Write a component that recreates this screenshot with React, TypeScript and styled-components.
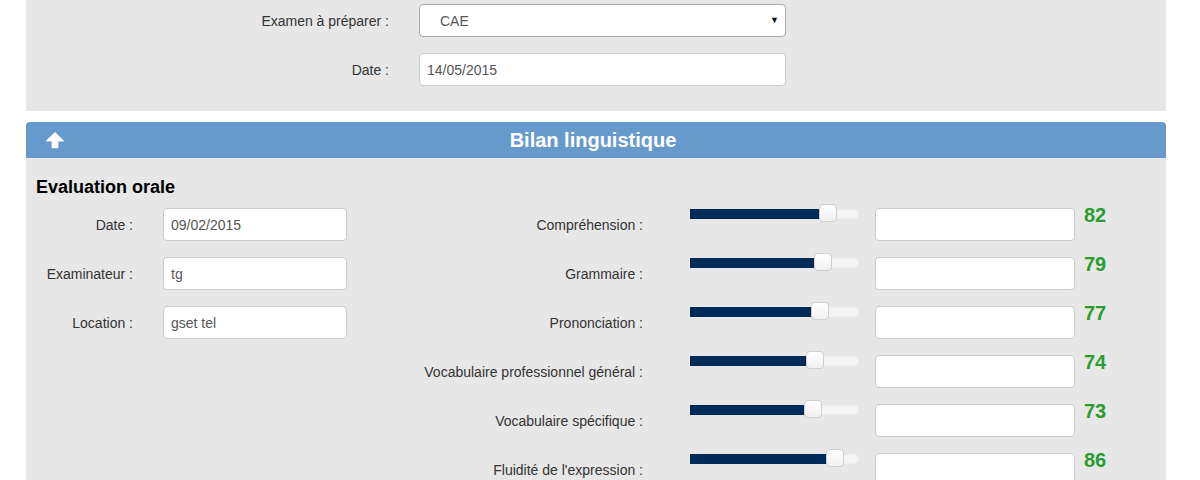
import * as React from 'react'
import styled, { createGlobalStyle } from 'styled-components'

const GlobalStyle = createGlobalStyle`
  body {
    margin: 0;
    background: #ffffff;
    font-family: "Liberation Sans", Arial, sans-serif;
    font-size: 14px;
    color: #333333;
  }
`

const Page = styled.div`
  width: 1140px;
  margin-left: 26px;
`

const ExamPanel = styled.div`
  background: #e7e7e7;
  padding: 4px 0 25px;
  display: grid;
  grid-template-columns: 363px 367px;
  column-gap: 30px;
  row-gap: 16px;
  align-items: center;
`

const FieldLabel = styled.label`
  text-align: right;
  line-height: 20px;
  color: #333333;
`

const SelectWrap = styled.div`
  position: relative;
  height: 33px;
`

const Select = styled.select`
  appearance: none;
  width: 100%;
  height: 33px;
  box-sizing: border-box;
  border: 1px solid #a9a9a9;
  border-radius: 4px;
  background: #ffffff;
  padding: 0 20px;
  font-family: inherit;
  font-size: 14px;
  color: #555555;
`

const SelectArrow = styled.span`
  position: absolute;
  right: 7px;
  top: 11px;
  font-size: 9px;
  color: #111111;
  pointer-events: none;
`

const TextInput = styled.input<{ $width: number }>`
  width: ${(p) => p.$width}px;
  height: 33px;
  box-sizing: border-box;
  border: 1px solid #cccccc;
  border-radius: 4px;
  background: #ffffff;
  padding: 0 7px;
  font-family: inherit;
  font-size: 14px;
  color: #555555;
  outline: none;
`

const Section = styled.section`
  margin-top: 11px;
`

const SectionHeader = styled.div`
  height: 36px;
  background: #6699cc;
  border-radius: 4px 4px 0 0;
  display: grid;
  grid-template-columns: 1fr auto 1fr;
  align-items: center;
  padding: 0 19px;
`

const HeaderTitle = styled.h2`
  margin: 0 6px 0 0;
  color: #ffffff;
  font-size: 20px;
  font-weight: bold;
  line-height: 24px;
`

const SectionBody = styled.div`
  background: #e7e7e7;
  padding: 19px 10px 30px;
`

const BlockTitle = styled.h3`
  margin: 0 0 11px;
  font-size: 18px;
  line-height: 20px;
  font-weight: bold;
  color: #000000;
`

const Columns = styled.div`
  display: flex;
  gap: 53px;
`

const InfoGrid = styled.div`
  display: grid;
  grid-template-columns: 97px 184px;
  column-gap: 30px;
  row-gap: 16px;
  align-content: start;
  align-items: center;
`

const SkillList = styled.div`
  display: flex;
  flex-direction: column;
  gap: 16px;
`

const SkillRow = styled.div`
  display: flex;
  align-items: flex-start;
  height: 33px;
`

const SkillLabel = styled.label`
  width: 243px;
  text-align: right;
  line-height: 20px;
  align-self: center;
  color: #333333;
`

const SliderTrack = styled.div`
  position: relative;
  width: 169px;
  height: 10px;
  margin: 1px 16px 0 47px;
  background: #f4f4f4;
  border: 1px solid #eeeeee;
  box-sizing: border-box;
  border-radius: 4px;
`

const SliderFill = styled.div`
  height: 10px;
  margin: -1px 0 0 -1px;
  background: #002b59;
`

const SliderHandle = styled.span`
  position: absolute;
  top: -6px;
  width: 18px;
  height: 18px;
  margin-left: -9px;
  box-sizing: border-box;
  background: linear-gradient(#ffffff, #f1f1f1);
  border: 1px solid #cfcfcf;
  border-radius: 4px;
`

const Score = styled.span`
  margin: -3px 0 0 9px;
  font-size: 20px;
  line-height: 20px;
  font-weight: bold;
  color: #2a9d2e;
`

const ArrowUpIcon = () => (
  <svg width="20" height="18" viewBox="0 0 19 17" fill="#ffffff">
    <path d="M9.5 0.8 L17.8 9 Q18.6 10 17.2 10 L12.7 10 L12.7 15.4 Q12.7 16.4 11.7 16.4 L7.3 16.4 Q6.3 16.4 6.3 15.4 L6.3 10 L1.8 10 Q0.4 10 1.2 9 Z" />
  </svg>
)

const infos = [
  { label: 'Date :', value: '09/02/2015' },
  { label: 'Examinateur :', value: 'tg' },
  { label: 'Location :', value: 'gset tel' },
]

const skills = [
  { label: 'Compréhension :', score: 82 },
  { label: 'Grammaire :', score: 79 },
  { label: 'Prononciation :', score: 77 },
  { label: 'Vocabulaire professionnel général :', score: 74 },
  { label: 'Vocabulaire spécifique :', score: 73 },
  { label: "Fluidité de l'expression :", score: 86 },
]

export default function App() {
  return (
    <>
      <GlobalStyle />
      <Page>
        <ExamPanel>
          <FieldLabel>Examen à préparer :</FieldLabel>
          <SelectWrap>
            <Select defaultValue="CAE">
              <option value="CAE">CAE</option>
            </Select>
            <SelectArrow>▼</SelectArrow>
          </SelectWrap>
          <FieldLabel>Date :</FieldLabel>
          <TextInput $width={367} defaultValue="14/05/2015" />
        </ExamPanel>

        <Section>
          <SectionHeader>
            <ArrowUpIcon />
            <HeaderTitle>Bilan linguistique</HeaderTitle>
            <span />
          </SectionHeader>
          <SectionBody>
            <BlockTitle>Evaluation orale</BlockTitle>
            <Columns>
              <InfoGrid>
                {infos.map((info) => (
                  <React.Fragment key={info.label}>
                    <FieldLabel>{info.label}</FieldLabel>
                    <TextInput $width={184} defaultValue={info.value} />
                  </React.Fragment>
                ))}
              </InfoGrid>
              <SkillList>
                {skills.map((skill) => (
                  <SkillRow key={skill.label}>
                    <SkillLabel>{skill.label}</SkillLabel>
                    <SliderTrack>
                      <SliderFill style={{ width: `${skill.score}%` }} />
                      <SliderHandle style={{ left: `${skill.score}%` }} />
                    </SliderTrack>
                    <TextInput $width={200} />
                    <Score>{skill.score}</Score>
                  </SkillRow>
                ))}
              </SkillList>
            </Columns>
          </SectionBody>
        </Section>
      </Page>
    </>
  )
}
